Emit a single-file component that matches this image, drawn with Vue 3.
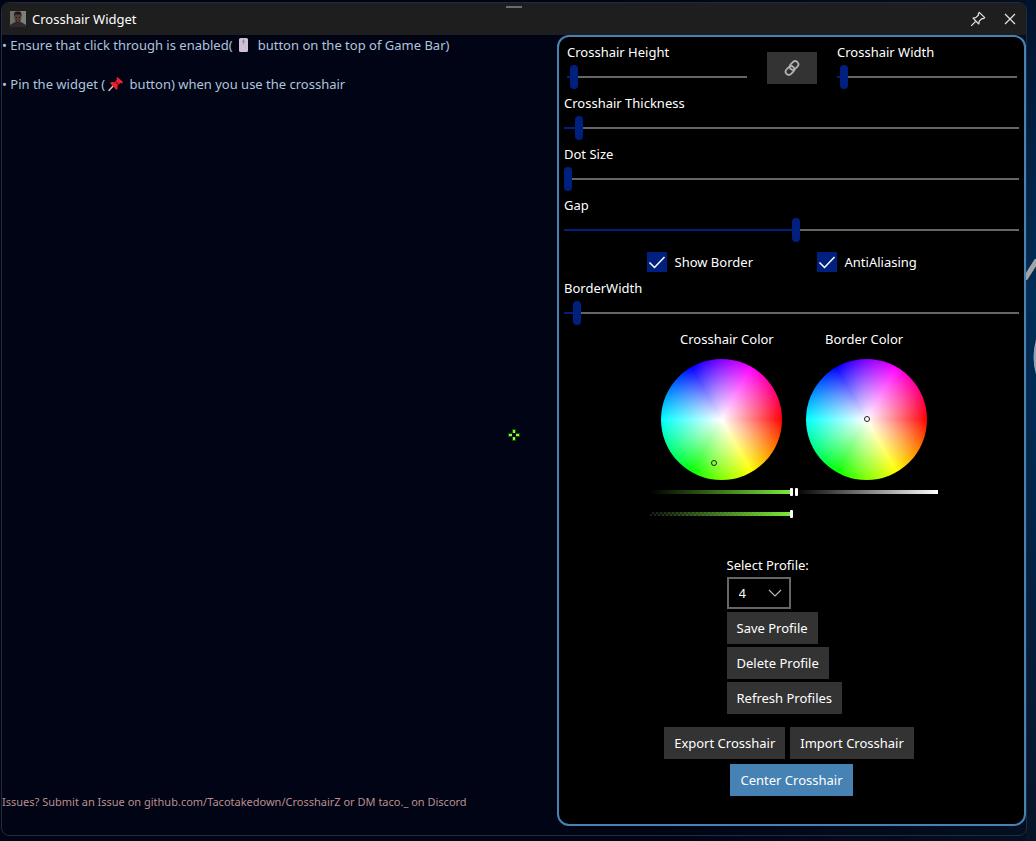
<script setup>
import { reactive, ref } from 'vue'

const size = reactive({
  height: { label: 'Crosshair Height', value: 2, min: 0, max: 100 },
  width: { label: 'Crosshair Width', value: 2, min: 0, max: 100 },
})
const shape = reactive([
  { id: 'thickness', label: 'Crosshair Thickness', value: 1, min: 0, max: 40 },
  { id: 'dot', label: 'Dot Size', value: 0, min: 0, max: 40 },
  { id: 'gap', label: 'Gap', value: 1, min: -50, max: 50 },
])
const border = reactive({ id: 'border', label: 'BorderWidth', value: 1, min: 0, max: 50 })
const showBorder = ref(true)
const antiAliasing = ref(true)
const profile = ref('4')
const lightness = ref(100)
const opacity = ref(100)
const borderLightness = ref(0)

const fill = (s) => ({ '--fill': ((s.value - s.min) / (s.max - s.min)) * 100 + '%' })
</script>

<template>
  <div class="desktop">
    <svg class="wallpaper" width="10" height="140" viewBox="0 0 10 140" aria-hidden="true">
      <path d="M-1 45 L11 26" stroke="#a3a3a6" stroke-width="5" fill="none" />
      <path d="M12 104 Q6 123 12 142" stroke="#8fa3b5" stroke-width="3" fill="none" />
    </svg>
    <main class="window">
      <header class="titlebar">
        <svg class="avatar" width="16" height="16" viewBox="0 0 16 16" aria-hidden="true">
          <rect width="16" height="16" fill="#6e706c" />
          <path d="M11 0h5v16h-5z" fill="#7d7f79" />
          <path d="M0 16v-2l5-3h6l5 3v2z" fill="#2b2c30" />
          <ellipse cx="7.800" cy="6.800" rx="3.500" ry="5.300" fill="#5a3f35" />
          <path d="M4.200 6C3.600 1.500 5 .6 7.800.6s4.300 1 3.600 5.400l-1-2.500H5.200z" fill="#1d1815" />
          <path d="M5.600 9q2.200-1 4.400 0l-.5 2.600q-1.700 1-3.400 0z" fill="#35241f" />
          <path d="M5.600 6.400H7M8.700 6.400h1.400" stroke="#1d1411" />
          <path d="M7 9.900h1.700" stroke="#8a6153" />
        </svg>
        <h1>Crosshair Widget</h1>
        <span class="grip"></span>
        <button class="icon-button" type="button" aria-label="Pin">
          <svg width="16" height="16" viewBox="0 0 16 16" fill="none" stroke="#e4e4e4" stroke-width="1.200" stroke-linejoin="round">
            <path d="M9.300 1.300 14.700 6.700 13.200 7.700 12 7.500 9.300 10.200 8.800 13 3 7.200 5.800 6.700 8.500 4 8.300 2.800z" />
            <path d="M5.700 10.300 1.200 14.800" />
          </svg>
        </button>
        <button class="icon-button" type="button" aria-label="Close">
          <svg width="12" height="12" viewBox="0 0 12 12" fill="none" stroke="#e4e4e4" stroke-width="1.200">
            <path d="M1 1 11 11M11 1 1 11" />
          </svg>
        </button>
      </header>

      <div class="body">
        <svg class="crosshair" width="12" height="12" viewBox="0 0 12 12" shape-rendering="crispEdges" aria-hidden="true">
          <g fill="#174d09">
            <path d="M4 0h4v5H4zM4 7h4v5H4zM0 4h5v4H0zM7 4h5v4H7z" />
          </g>
          <path d="M4 4h4v4H4z" fill="#000414" />
          <g fill="#80ff38">
            <path d="M5 1h2v3H5zM5 8h2v3H5zM1 5h3v2H1zM8 5h3v2H8z" />
          </g>
        </svg>

        <section class="notes">
          <div class="tips">
            <p>• Ensure that click through is enabled(
              <svg class="mouse" width="15" height="15" viewBox="0 0 15 15" aria-hidden="true">
                <rect x="3" y="0" width="9" height="14" rx="1.500" fill="#cfc1d5" />
                <rect x="6.500" y="2" width="2" height="3" rx="1" fill="#8f8298" />
                <path d="M7.500 0v2M7.500 5v2" stroke="#a99cb1" stroke-width=".7" />
              </svg>&nbsp; button on the top of Game Bar)</p>
            <p>• Pin the widget (<svg class="pin" width="21" height="15" viewBox="0 0 21 15" aria-hidden="true">
                <path d="M8.500 8.500 4 13.500" stroke="#c9c4cc" stroke-width="1.500" stroke-linecap="round" />
                <path d="M12.500 0 18 5 17 6.500 15.500 6 12.500 8.500 12.500 11.500 11.500 13 5 6 6.500 5 9.500 5.200 12 2.500 11.500 1z" fill="#f0202c" />
                <path d="M9.500 5.200 12.500 8.500 14.500 6.800 11.200 3.500z" fill="#b5101f" />
              </svg> button) when you use the crosshair</p>
          </div>
          <p class="issues">Issues? Submit an Issue on github.com/Tacotakedown/CrosshairZ or DM taco._ on Discord</p>
        </section>

        <form class="panel" @submit.prevent>
          <div class="size-row">
            <div class="field">
              <label for="height">{{ size.height.label }}</label>
              <input id="height" v-model.number="size.height.value" class="slider" type="range" :min="size.height.min" :max="size.height.max" :style="fill(size.height)" />
            </div>
            <button class="button link" type="button" aria-label="Link height and width">
              <svg width="16" height="16" viewBox="0 0 16 16" fill="none" stroke="#b0b0b0" stroke-width="1.800">
                <rect x="5.200" y="2.300" width="9.600" height="6.400" rx="3.200" transform="rotate(-45 10 5.500)" />
                <rect x="1.200" y="7.300" width="9.600" height="6.400" rx="3.200" transform="rotate(-45 6 10.500)" />
              </svg>
            </button>
            <div class="field">
              <label for="width">{{ size.width.label }}</label>
              <input id="width" v-model.number="size.width.value" class="slider" type="range" :min="size.width.min" :max="size.width.max" :style="fill(size.width)" />
            </div>
          </div>

          <div v-for="s in shape" :key="s.id" class="field">
            <label :for="s.id">{{ s.label }}</label>
            <input :id="s.id" v-model.number="s.value" class="slider" type="range" :min="s.min" :max="s.max" :style="fill(s)" />
          </div>

          <div class="checks">
            <label class="check"><span class="box"><input v-model="showBorder" type="checkbox" /><svg width="20" height="20" viewBox="0 0 20 20" aria-hidden="true"><path d="M2.500 10.500 7.500 15.500 17.500 5" /></svg></span>Show Border</label>
            <label class="check"><span class="box"><input v-model="antiAliasing" type="checkbox" /><svg width="20" height="20" viewBox="0 0 20 20" aria-hidden="true"><path d="M2.500 10.500 7.500 15.500 17.500 5" /></svg></span>AntiAliasing</label>
          </div>

          <div class="field">
            <label :for="border.id">{{ border.label }}</label>
            <input :id="border.id" v-model.number="border.value" class="slider" type="range" :min="border.min" :max="border.max" :style="fill(border)" />
          </div>

          <div class="colors">
            <div class="color">
              <h2>Crosshair Color</h2>
              <div class="wheel"><span class="marker green"></span></div>
              <input v-model="lightness" class="ramp lime" type="range" aria-label="Crosshair brightness" />
              <input v-model="opacity" class="ramp lime alpha" type="range" aria-label="Crosshair opacity" />
            </div>
            <div class="color">
              <h2>Border Color</h2>
              <div class="wheel"><span class="marker"></span></div>
              <input v-model="borderLightness" class="ramp" type="range" aria-label="Border brightness" />
            </div>
          </div>

          <div class="profile">
            <label for="profile">Select Profile:</label>
            <div class="select">
              <select id="profile" v-model="profile">
                <option v-for="n in 4" :key="n" :value="String(n)">{{ n }}</option>
              </select>
              <svg width="14" height="8" viewBox="0 0 14 8" fill="none" stroke="#b8b8b8" stroke-width="1.200" aria-hidden="true"><path d="M1 1 7 7 13 1" /></svg>
            </div>
            <button class="button" type="button">Save Profile</button>
            <button class="button" type="button">Delete Profile</button>
            <button class="button" type="button">Refresh Profiles</button>
          </div>

          <div class="transfer">
            <button class="button" type="button">Export Crosshair</button>
            <button class="button" type="button">Import Crosshair</button>
          </div>
          <button class="button primary" type="button">Center Crosshair</button>
        </form>
      </div>
    </main>
  </div>
</template>

<style>
body {
  background: #000414;
}
</style>

<style scoped>
* {
  box-sizing: border-box;
}
h1,
h2,
p {
  margin: 0;
  font-size: inherit;
  font-weight: 400;
}
button,
select,
input {
  margin: 0;
  font: inherit;
  color: inherit;
}
.desktop {
  position: relative;
  display: flex;
  min-height: 100vh;
  padding: 2px 9px 5px 1px;
  background:
    linear-gradient(to bottom, #02122c, #002e58 35%, #002a52 50%, #04203f 70%, #081426) right / 10px 100% no-repeat,
    linear-gradient(to right, #000414 60%, #030f22);
  color: #fff;
  font: 13px/20px "Noto Sans", "Open Sans", sans-serif;
}
.wallpaper {
  position: absolute;
  right: 0;
  top: 234px;
}
.window {
  display: flex;
  flex: 1;
  flex-direction: column;
  min-width: 0;
  border: 1px solid #232b3a;
  border-radius: 8px;
  overflow: hidden;
}
.titlebar {
  position: relative;
  display: flex;
  align-items: center;
  height: 32px;
  padding-left: 8px;
  background: #1e1e1e;
}
.titlebar h1 {
  flex: 1;
  margin-left: 6px;
}
.grip {
  position: absolute;
  top: 3px;
  left: calc(50% - 8px);
  width: 16px;
  height: 2px;
  background: #6b6b6b;
}
.icon-button {
  display: flex;
  align-items: center;
  justify-content: center;
  width: 32px;
  height: 32px;
  padding: 0;
  border: 0;
  background: none;
}
.body {
  position: relative;
  display: grid;
  flex: 1;
  grid-template-columns: minmax(0, 1fr) 469px;
}
.crosshair {
  position: absolute;
  top: calc(50% - 6px);
  left: calc(50% - 6px);
}
.notes {
  display: flex;
  flex-direction: column;
  justify-content: space-between;
  padding-bottom: 25px;
}
.tips {
  display: grid;
  gap: 19px;
  color: #b0c4de;
}
.mouse,
.pin {
  vertical-align: -3px;
}
.issues {
  color: #bc8f8f;
  font-size: 11px;
  line-height: 16px;
}
.panel {
  display: flex;
  flex-direction: column;
  margin-bottom: 9px;
  padding: 5px;
  border: 2px solid #4682b4;
  border-radius: 12px;
  background: #000;
}
.size-row {
  display: grid;
  grid-template-columns: 1fr 50px 1fr;
  gap: 20px;
  align-items: center;
  padding: 0 2px 0 3px;
}
.field {
  display: flex;
  flex-direction: column;
}
.slider {
  width: 100%;
  height: 32px;
  margin-top: -1px;
  appearance: none;
  background: none;
}
.slider::-webkit-slider-runnable-track {
  height: 2px;
  background: linear-gradient(to right, #002080 var(--fill), #666 var(--fill));
}
.slider::-webkit-slider-thumb {
  width: 8px;
  height: 24px;
  margin-top: -11px;
  appearance: none;
  border-radius: 4px;
  background: #002080;
}
.button {
  height: 32px;
  padding: 0 10px;
  border: 0;
  background: #333;
  white-space: nowrap;
}
.link {
  display: flex;
  align-items: center;
  justify-content: center;
}
.checks {
  display: flex;
  gap: 50px;
  justify-content: center;
}
.check {
  display: flex;
  gap: 8px;
  align-items: center;
  width: 120px;
  height: 32px;
}
.box {
  display: grid;
}
.box input,
.box svg {
  grid-area: 1 / 1;
}
.box input {
  width: 20px;
  height: 20px;
  appearance: none;
  border: 2px solid #888;
}
.box input:checked {
  border: 0;
  background: #002080;
}
.box svg {
  fill: none;
  stroke: #fff;
  stroke-width: 1.5;
  pointer-events: none;
}
.box input:not(:checked) + svg {
  visibility: hidden;
}
.colors {
  display: flex;
  justify-content: center;
  height: 226px;
  padding-left: 7px;
}
.color {
  display: flex;
  flex-direction: column;
  width: 145px;
}
.color h2 {
  padding-left: 30px;
}
.wheel {
  position: relative;
  width: 121px;
  height: 121px;
  margin: 10px 0 4px 11px;
  border-radius: 50%;
  background:
    radial-gradient(closest-side, #fff, transparent),
    conic-gradient(from 90deg, #f00, #ff0, #0f0, #0ff, #00f, #f0f, #f00);
}
.marker {
  position: absolute;
  top: 57px;
  left: 58px;
  width: 6px;
  height: 6px;
  border: 1px solid #222;
  border-radius: 50%;
}
.marker.green {
  top: 101px;
  left: 50px;
}
.ramp {
  width: 143px;
  height: 16px;
  margin-bottom: 6px;
  appearance: none;
  background: none;
}
.ramp::-webkit-slider-runnable-track {
  height: 4px;
  background: linear-gradient(to right, #000, #fff);
}
.ramp.lime::-webkit-slider-runnable-track {
  background: linear-gradient(to right, #000, #7cf038);
}
.ramp.alpha::-webkit-slider-runnable-track {
  background:
    linear-gradient(to right, transparent, #7cf038),
    repeating-conic-gradient(#1c1c1c 0 25%, #000 0 50%) 0 0 / 4px 4px;
}
.ramp::-webkit-slider-thumb {
  width: 3px;
  height: 8px;
  margin-top: -2px;
  appearance: none;
  border-radius: 1px;
  background: #fff;
}
.profile {
  display: flex;
  flex-direction: column;
  gap: 3px;
  align-items: flex-start;
  align-self: center;
  width: 130px;
}
.profile label {
  margin-bottom: -1px;
}
.select {
  display: grid;
  align-items: center;
}
.select select,
.select svg {
  grid-area: 1 / 1;
}
.select select {
  width: 64px;
  height: 32px;
  padding: 0 10px;
  appearance: none;
  border: 2px solid #666;
  border-radius: 0;
  background: #000;
}
.select svg {
  justify-self: end;
  margin-right: 9px;
  pointer-events: none;
}
.transfer {
  display: flex;
  gap: 5px;
  justify-content: center;
  margin: 13px 5px 5px 0;
}
.primary {
  align-self: center;
  background: #4682b4;
}
</style>
